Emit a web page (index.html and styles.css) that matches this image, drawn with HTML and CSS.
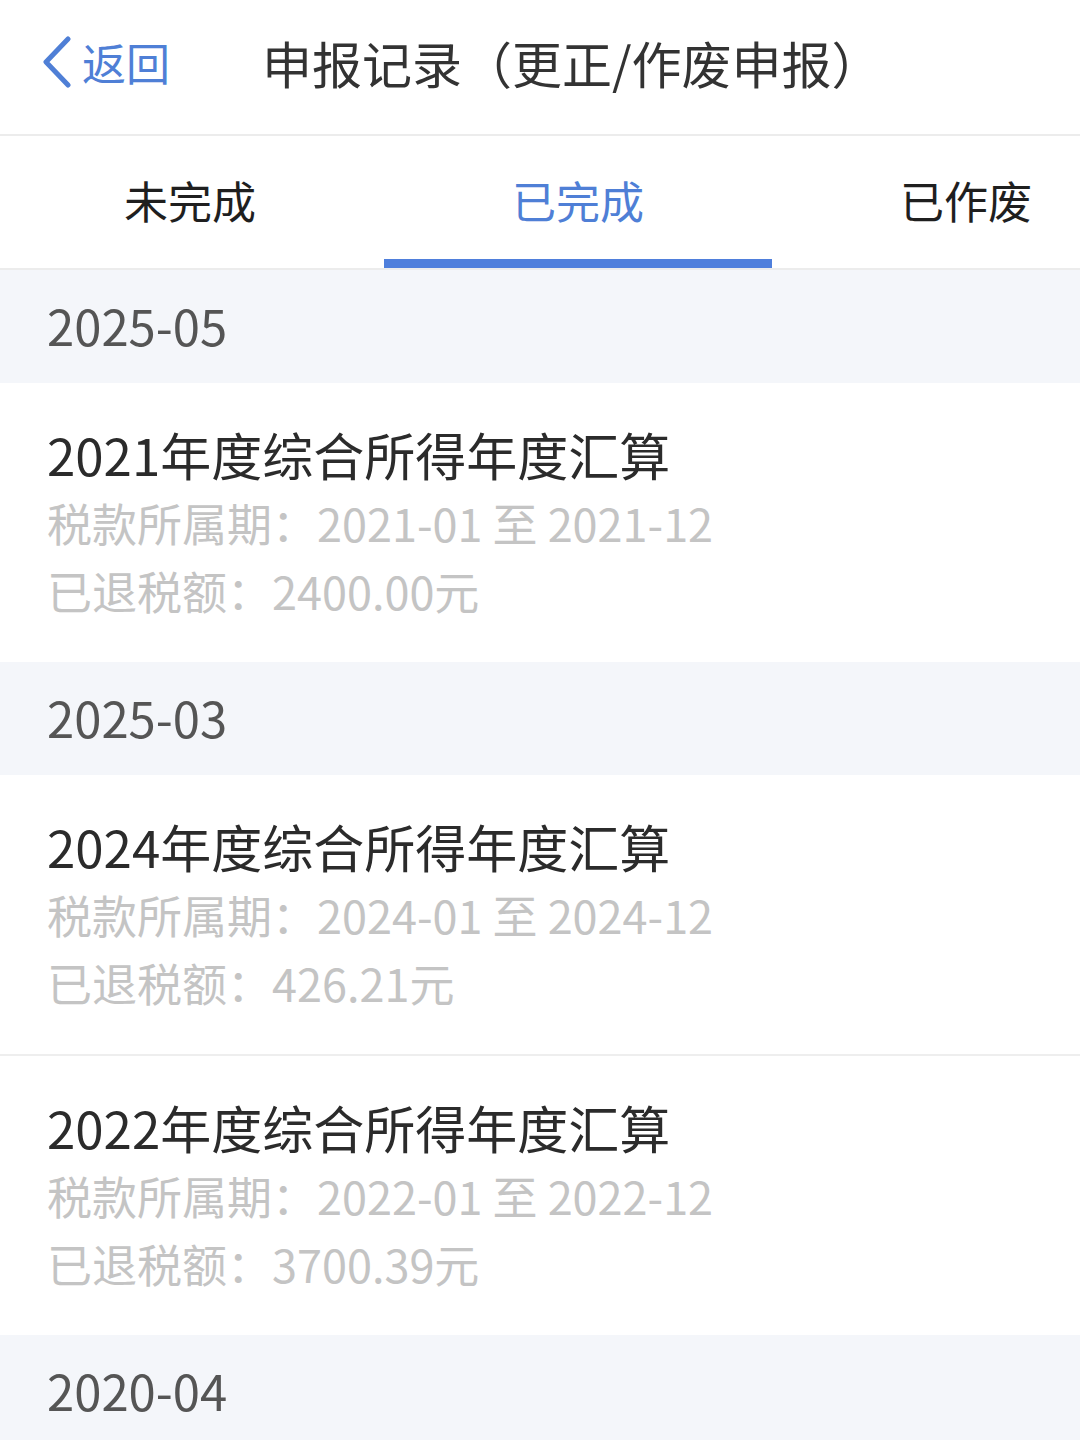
FILE: index.html
```html
<!DOCTYPE html>
<html lang="zh-CN">
  <head>
    <meta charset="UTF-8" />
    <meta name="viewport" content="width=device-width, initial-scale=1.0" />
    <title>申报记录（更正/作废申报）</title>
    <link rel="stylesheet" href="styles.css">
  </head>
  <body>
    <div class="header">
      <div class="back">
        <svg class="chevron" width="30" height="52" viewBox="0 0 30 52">
          <polyline points="26,3 4,26 26,49" fill="none" stroke="#4f7fd6" stroke-width="5" stroke-linecap="round" stroke-linejoin="round" />
        </svg>
        <span>返回</span>
      </div>
      <h1 class="title">申报记录（更正/作废申报）</h1>
    </div>

    <div class="tabs">
      <div class="tab">未完成</div>
      <div class="tab active">已完成</div>
      <div class="tab">已作废</div>
    </div>

    <div class="group-title">2025-05</div>
    <div class="item">
      <div class="item-name">2021年度综合所得年度汇算</div>
      <div class="item-line">税款所属期：2021-01 至 2021-12</div>
      <div class="item-line">已退税额：2400.00元</div>
    </div>

    <div class="group-title">2025-03</div>
    <div class="item">
      <div class="item-name">2024年度综合所得年度汇算</div>
      <div class="item-line">税款所属期：2024-01 至 2024-12</div>
      <div class="item-line">已退税额：426.21元</div>
    </div>
    <div class="item divided">
      <div class="item-name">2022年度综合所得年度汇算</div>
      <div class="item-line">税款所属期：2022-01 至 2022-12</div>
      <div class="item-line">已退税额：3700.39元</div>
    </div>

    <div class="group-title">2020-04</div>
  </body>
</html>
```

FILE: styles.css
```css
body {
  font-family: "Noto Sans CJK SC", "Noto Sans", sans-serif;
  margin: 0;
  padding: 0;
  background-color: #f4f6fa;
  overflow: hidden;
}
.header {
  display: flex;
  align-items: center;
  height: 136px;
  box-sizing: border-box;
  padding: 0 0 10px 42px;
  background-color: #fff;
  border-bottom: 2px solid #ececec;
}
.back {
  display: flex;
  align-items: center;
  color: #4f7fd6;
  font-size: 44px;
  width: 220px;
}
.chevron {
  margin-right: 10px;
}
.title {
  margin: 0;
  font-size: 50px;
  font-weight: normal;
  color: #333;
}
.tabs {
  display: flex;
  height: 134px;
  box-sizing: border-box;
  overflow: hidden;
  margin-left: -4px;
  background-color: #fff;
  border-bottom: 2px solid #ececec;
}
.tab {
  flex: 0 0 388px;
  display: flex;
  align-items: center;
  justify-content: center;
  font-size: 44px;
  color: #1f1f1f;
  box-sizing: border-box;
  border-bottom: 9px solid transparent;
  padding-top: 5px;
}
.tab.active {
  color: #4f7fd6;
  border-bottom-color: #4f7fdc;
}
.group-title {
  height: 113px;
  line-height: 110px;
  padding-left: 47px;
  font-size: 49px;
  color: #555;
}
.item {
  background-color: #fff;
  padding: 36px 47px 37px;
}
.item.divided {
  border-top: 2px solid #eeeeee;
}
.item-name {
  font-size: 51px;
  line-height: 70px;
  color: #2b2b2b;
}
.item-line {
  font-size: 45px;
  line-height: 68px;
  color: #c4c4c4;
}
```
